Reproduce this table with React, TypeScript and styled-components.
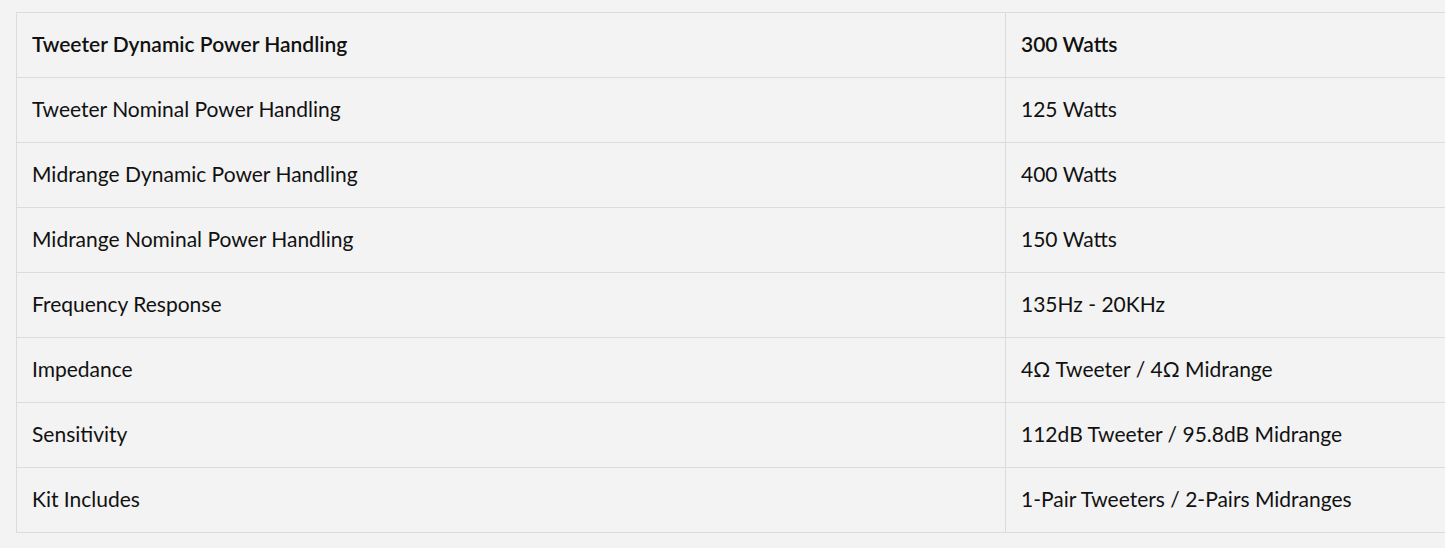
import React from "react";
import styled, { createGlobalStyle } from "styled-components";

const Global = createGlobalStyle`
  html, body { margin: 0; padding: 0; background: #f3f3f3; overflow: hidden; }
  body { font-family: "Lato", "Noto Sans", sans-serif; }
`;

const Wrap = styled.div`
  padding: 12px 0 0 16px;
`;

const Table = styled.table`
  width: 1480px;
  border-collapse: collapse;
  background: #f3f3f3;
  border: 1px solid #dcdcdc;
`;

const Cell = styled.td<{ $bold?: boolean; $w?: string }>`
  height: 65px;
  box-sizing: border-box;
  padding: 0 15px 3px;
  border: 1px solid #dcdcdc;
  color: #111;
  font-size: 21px;
  font-weight: ${(p) => (p.$bold ? 600 : 400)};
  width: ${(p) => p.$w || "auto"};
  vertical-align: middle;
`;

const rows: [string, string][] = [
  ["Tweeter Dynamic Power Handling", "300 Watts"],
  ["Tweeter Nominal Power Handling", "125 Watts"],
  ["Midrange Dynamic Power Handling", "400 Watts"],
  ["Midrange Nominal Power Handling", "150 Watts"],
  ["Frequency Response", "135Hz - 20KHz"],
  ["Impedance", "4Ω Tweeter / 4Ω Midrange"],
  ["Sensitivity", "112dB Tweeter / 95.8dB Midrange"],
  ["Kit Includes", "1-Pair Tweeters / 2-Pairs Midranges"],
];

export default function App() {
  return (
    <>
      <Global />
      <Wrap>
        <Table>
          <tbody>
            {rows.map(([k, v], i) => (
              <tr key={k}>
                <Cell $bold={i === 0} $w="989px">{k}</Cell>
                <Cell $bold={i === 0}>{v}</Cell>
              </tr>
            ))}
          </tbody>
        </Table>
      </Wrap>
    </>
  );
}
